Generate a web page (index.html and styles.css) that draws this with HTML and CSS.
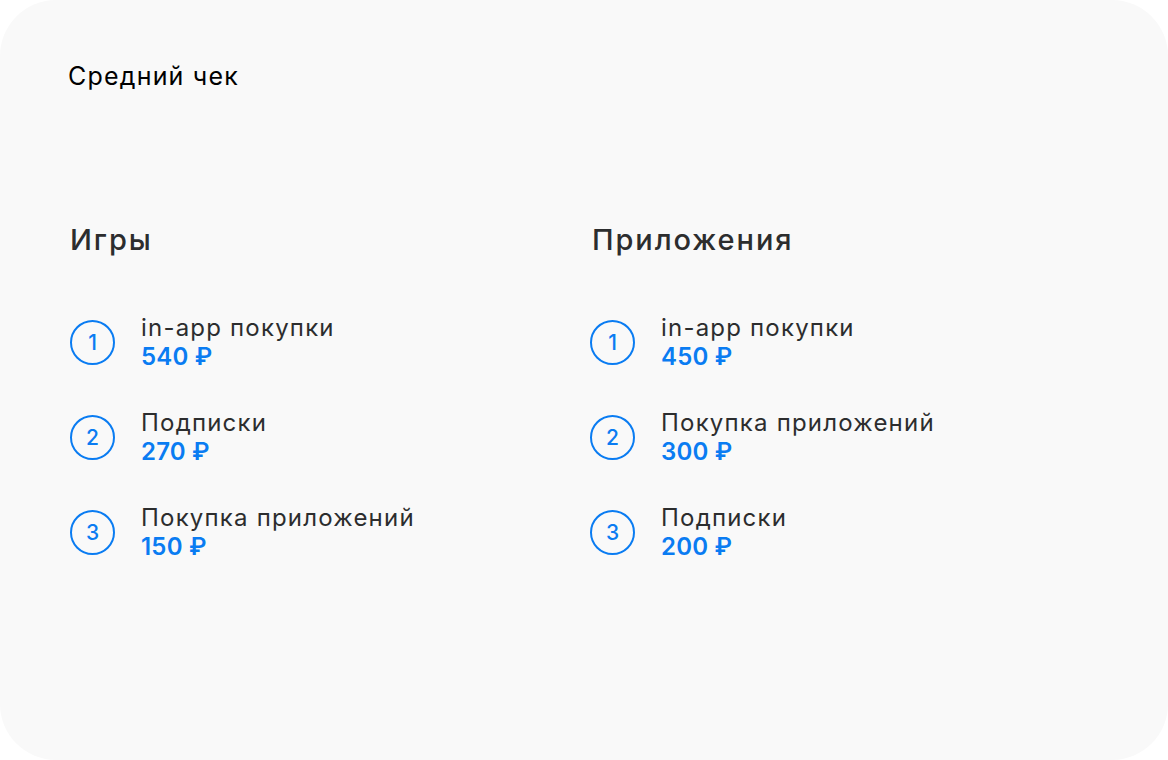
FILE: index.html
```html
<!DOCTYPE html>
<html lang="ru">
<head>
<meta charset="utf-8">
<link rel="stylesheet" href="styles.css">
</head>
<body>
<div class="card">
  <div class="title">Средний чек</div>
  <div class="cols">
    <div class="col">
      <div class="heading">Игры</div>
      <div class="list">
        <div class="row"><div class="num">1</div><div class="txt"><div class="name">in-app покупки</div><div class="price">540 ₽</div></div></div>
        <div class="row"><div class="num">2</div><div class="txt"><div class="name">Подписки</div><div class="price">270 ₽</div></div></div>
        <div class="row"><div class="num">3</div><div class="txt"><div class="name">Покупка приложений</div><div class="price">150 ₽</div></div></div>
      </div>
    </div>
    <div class="col">
      <div class="heading">Приложения</div>
      <div class="list">
        <div class="row"><div class="num">1</div><div class="txt"><div class="name">in-app покупки</div><div class="price">450 ₽</div></div></div>
        <div class="row"><div class="num">2</div><div class="txt"><div class="name">Покупка приложений</div><div class="price">300 ₽</div></div></div>
        <div class="row"><div class="num">3</div><div class="txt"><div class="name">Подписки</div><div class="price">200 ₽</div></div></div>
      </div>
    </div>
  </div>
</div>
</body>
</html>
```

FILE: styles.css
```css
* { box-sizing: border-box; margin: 0; padding: 0; }
html, body { background: #ffffff; }
body { font-family: Inter, "Noto Sans", sans-serif; }
.card {
  width: 1168px;
  height: 760px;
  background: #f9f9f9;
  border-radius: 56px;
  padding: 61px 0 0 68px;
}
.title {
  font-size: 25px;
  line-height: 30px;
  color: #000;
  letter-spacing: 1.2px;
}
.cols {
  display: grid;
  grid-template-columns: 520px 520px;
  margin-top: 131px;
  margin-left: 2px;
}
.col:nth-child(2) .heading { margin-left: 2px; }
.heading {
  font-size: 29px;
  line-height: 36px;
  color: #2c2d2e;
  font-weight: 500;
  letter-spacing: 1.9px;
}
.list {
  display: flex;
  flex-direction: column;
  gap: 37px;
  margin-top: 55px;
}
.row {
  display: flex;
  align-items: center;
  gap: 26px;
}
.num {
  width: 45px;
  height: 45px;
  border: 2.75px solid #0a7cf2;
  border-radius: 50%;
  display: flex;
  align-items: center;
  justify-content: center;
  color: #0a7cf2;
  font-size: 21px;
  font-weight: 500;
  flex: none;
}
.txt { display: flex; flex-direction: column; }
.name {
  font-size: 24px;
  line-height: 29px;
  color: #2c2d2e;
  letter-spacing: 1.2px;
}
.price {
  font-size: 24px;
  line-height: 29px;
  color: #0a7cf2;
  font-weight: 600;
  letter-spacing: 0.2px;
}
```
